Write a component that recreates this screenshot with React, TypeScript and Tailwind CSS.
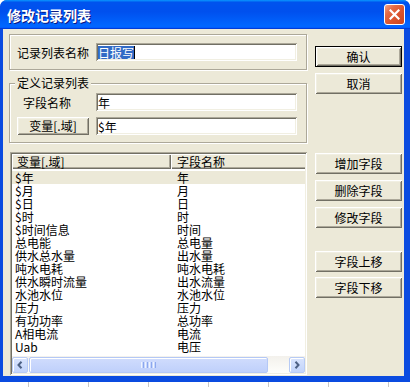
import React from "react";

const raised =
  "bg-[#ECE9D8] shadow-[inset_1px_1px_#ffffff,inset_-1px_-1px_#716F64,inset_2px_2px_#F1EFE2,inset_-2px_-2px_#ACA899]";
const sunken =
  "bg-white shadow-[inset_1px_1px_#ACA899,inset_-1px_-1px_#ffffff,inset_2px_2px_#716F64,inset_-2px_-2px_#F1EFE2]";
const headerCell =
  "bg-[#ECE9D8] shadow-[inset_1px_1px_#ffffff,inset_-1px_-1px_#716F64,inset_-2px_-2px_#ACA899]";

const rows: [string, string][] = [
  ["$年", "年"],
  ["$月", "月"],
  ["$日", "日"],
  ["$时", "时"],
  ["$时间信息", "时间"],
  ["总电能", "总电量"],
  ["供水总水量", "出水量"],
  ["吨水电耗", "吨水电耗"],
  ["供水瞬时流量", "出水流量"],
  ["水池水位", "水池水位"],
  ["压力", "压力"],
  ["有功功率", "总功率"],
  ["A相电流", "电流"],
  ["Uab", "电压"],
];

function Btn({ label, def, className = "" }: { label: string; def?: boolean; className?: string }) {
  if (def) {
    return (
      <div className={`w-[87px] h-[21px] border border-black ${className}`}>
        <div className={`w-full h-full flex items-center justify-center leading-[12px] ${raised}`}>{label}</div>
      </div>
    );
  }
  return (
    <div className={`w-[87px] h-[21px] flex items-center justify-center leading-[12px] ${raised} ${className}`}>
      {label}
    </div>
  );
}

function ScrollBtn({ dir }: { dir: "l" | "r" }) {
  return (
    <div className="w-[16px] h-[16px] rounded-[2px] border border-[#B7CBF5] bg-[linear-gradient(180deg,#D9E4FD,#C2D4FB)] shadow-[inset_1px_1px_#ffffff] flex items-center justify-center">
      <svg width="6" height="8" viewBox="0 0 6 8">
        {dir === "l" ? (
          <path d="M4.5 0.8 L1.5 4 L4.5 7.2" stroke="#4D6185" strokeWidth="2" fill="none" />
        ) : (
          <path d="M1.5 0.8 L4.5 4 L1.5 7.2" stroke="#4D6185" strokeWidth="2" fill="none" />
        )}
      </svg>
    </div>
  );
}

export default function App() {
  return (
    <div className="w-[410px] h-[387px] bg-white overflow-hidden font-['Noto_Sans_CJK_SC',sans-serif] text-[12px] text-black flex flex-col">
      <div className="w-[410px] h-[382px] flex flex-col rounded-t-[7px] bg-[#0A4BE0] overflow-hidden">
        {/* title bar */}
        <div className="h-[29px] shrink-0 flex items-center pl-[7px] pr-[5px] bg-[linear-gradient(180deg,#0997ff,#0053ee_8%,#0050ee_40%,#0066ff_88%,#0066ff_93%,#005bff_95%,#003dd7_96%,#003dd7)]">
          <span className="text-white font-bold text-[14px] leading-[16px] [text-shadow:1px_1px_0_#0a1883]">
            修改记录列表
          </span>
          <div className="ml-auto w-[21px] h-[21px] rounded-[3px] border border-white bg-[linear-gradient(135deg,#F2A487_0%,#E46B46_28%,#DA532D_60%,#C9441F_100%)] flex items-center justify-center">
            <svg width="11" height="11" viewBox="0 0 11 11">
              <path d="M1.5 1.5 L9.5 9.5 M9.5 1.5 L1.5 9.5" stroke="white" strokeWidth="2.2" strokeLinecap="square" />
            </svg>
          </div>
        </div>
        {/* client */}
        <div className="flex-1 flex pl-[3px] pr-[6px] pb-[6px]">
          <div className="flex-1 bg-[#ECE9D8] flex pl-[6px] pr-[2px]">
            {/* left column */}
            <div className="w-[298px] flex flex-col pt-[5px] pb-[1px]">
              {/* group 1 */}
              <div className="h-[36px] flex items-center border border-[#ACA899] shadow-[inset_1px_1px_#ffffff,1px_1px_#ffffff] pl-[7px]">
                <div className="w-[79px] leading-[13px]">记录列表名称</div>
                <div className={`w-[201px] h-[18px] flex items-center pl-[2px] ${sunken}`}>
                  <span className="bg-[#316AC5] text-white leading-[13px]">日报写</span>
                  <span className="w-[1px] h-[13px] bg-black" />
                </div>
              </div>
              {/* group 2 */}
              <div className="relative mt-[13px] h-[60px] border border-[#ACA899] shadow-[inset_1px_1px_#ffffff,1px_1px_#ffffff] pl-[7px] pt-[9px] flex flex-col gap-[6px]">
                <div className="absolute -top-[8px] left-[5px] px-[2px] bg-[#ECE9D8] leading-[14px]">定义记录列表</div>
                <div className="flex items-center h-[18px]">
                  <div className="w-[79px] pl-[6px] leading-[13px]">字段名称</div>
                  <div className={`w-[201px] h-[18px] flex items-center pl-[2px] leading-[13px] ${sunken}`}>年</div>
                </div>
                <div className="flex items-center h-[18px]">
                  <div className={`w-[72px] h-[18px] flex items-center justify-center leading-[12px] ${raised}`}>
                    变量[.域]
                  </div>
                  <div className={`ml-[7px] w-[201px] h-[18px] flex items-center pl-[2px] leading-[13px] ${sunken}`}>
                    $年
                  </div>
                </div>
              </div>
              {/* list view */}
              <div className={`mt-[9px] ml-[1px] flex-1 flex flex-col p-[2px] ${sunken}`}>
                <div className="h-[15px] flex overflow-hidden shrink-0">
                  <div className={`w-[159px] shrink-0 pl-[5px] leading-[15px] ${headerCell}`}>变量[.域]</div>
                  <div className={`w-[200px] shrink-0 pl-[6px] leading-[15px] ${headerCell}`}>字段名称</div>
                </div>
                <div className="mt-[2px] flex flex-col">
                  {rows.map(([a, b], i) => (
                    <div key={i} className={`h-[13px] flex leading-[13px] ${i === 0 ? "bg-[#ECE9D8]" : ""}`}>
                      <div className="w-[159px] shrink-0 pl-[3px]">{a}</div>
                      <div className="pl-[6px]">{b}</div>
                    </div>
                  ))}
                </div>
                {/* horizontal scrollbar */}
                <div className="mt-auto h-[17px] flex items-center bg-[linear-gradient(180deg,#F3F1EC,#FEFEFB)]">
                  <ScrollBtn dir="l" />
                  <div className="ml-[1px] w-[239px] h-[16px] rounded-[2px] border border-[#B4C8F6] bg-[linear-gradient(180deg,#D0DCFD,#BFD0FB)] shadow-[inset_1px_1px_#ffffff] flex items-center justify-center gap-[1px]">
                    <div className="w-[1px] h-[6px] bg-[#EEF4FE]" />
                    <div className="w-[1px] h-[6px] bg-[#8CA8EE]" />
                    <div className="w-[1px] h-[6px] bg-[#EEF4FE]" />
                    <div className="w-[1px] h-[6px] bg-[#8CA8EE]" />
                    <div className="w-[1px] h-[6px] bg-[#EEF4FE]" />
                    <div className="w-[1px] h-[6px] bg-[#8CA8EE]" />
                    <div className="w-[1px] h-[6px] bg-[#EEF4FE]" />
                    <div className="w-[1px] h-[6px] bg-[#8CA8EE]" />
                  </div>
                  <div className="flex-1" />
                  <ScrollBtn dir="r" />
                </div>
              </div>
            </div>
            {/* right column */}
            <div className="ml-[8px] flex flex-col pt-[17px]">
              <Btn label="确认" def />
              <Btn label="取消" className="mt-[6px]" />
              <Btn label="增加字段" className="mt-[59px]" />
              <Btn label="删除字段" className="mt-[6px]" />
              <Btn label="修改字段" className="mt-[6px]" />
              <Btn label="字段上移" className="mt-[23px]" />
              <Btn label="字段下移" className="mt-[5px]" />
            </div>
          </div>
        </div>
      </div>
      {/* background below window */}
      <div className="h-[5px] flex pl-[28px] gap-[59px]">
        {[0, 1, 2, 3, 4, 5, 6].map((i) => (
          <div key={i} className="w-[1px] h-[5px] bg-[#C8C8C8]" />
        ))}
      </div>
    </div>
  );
}
